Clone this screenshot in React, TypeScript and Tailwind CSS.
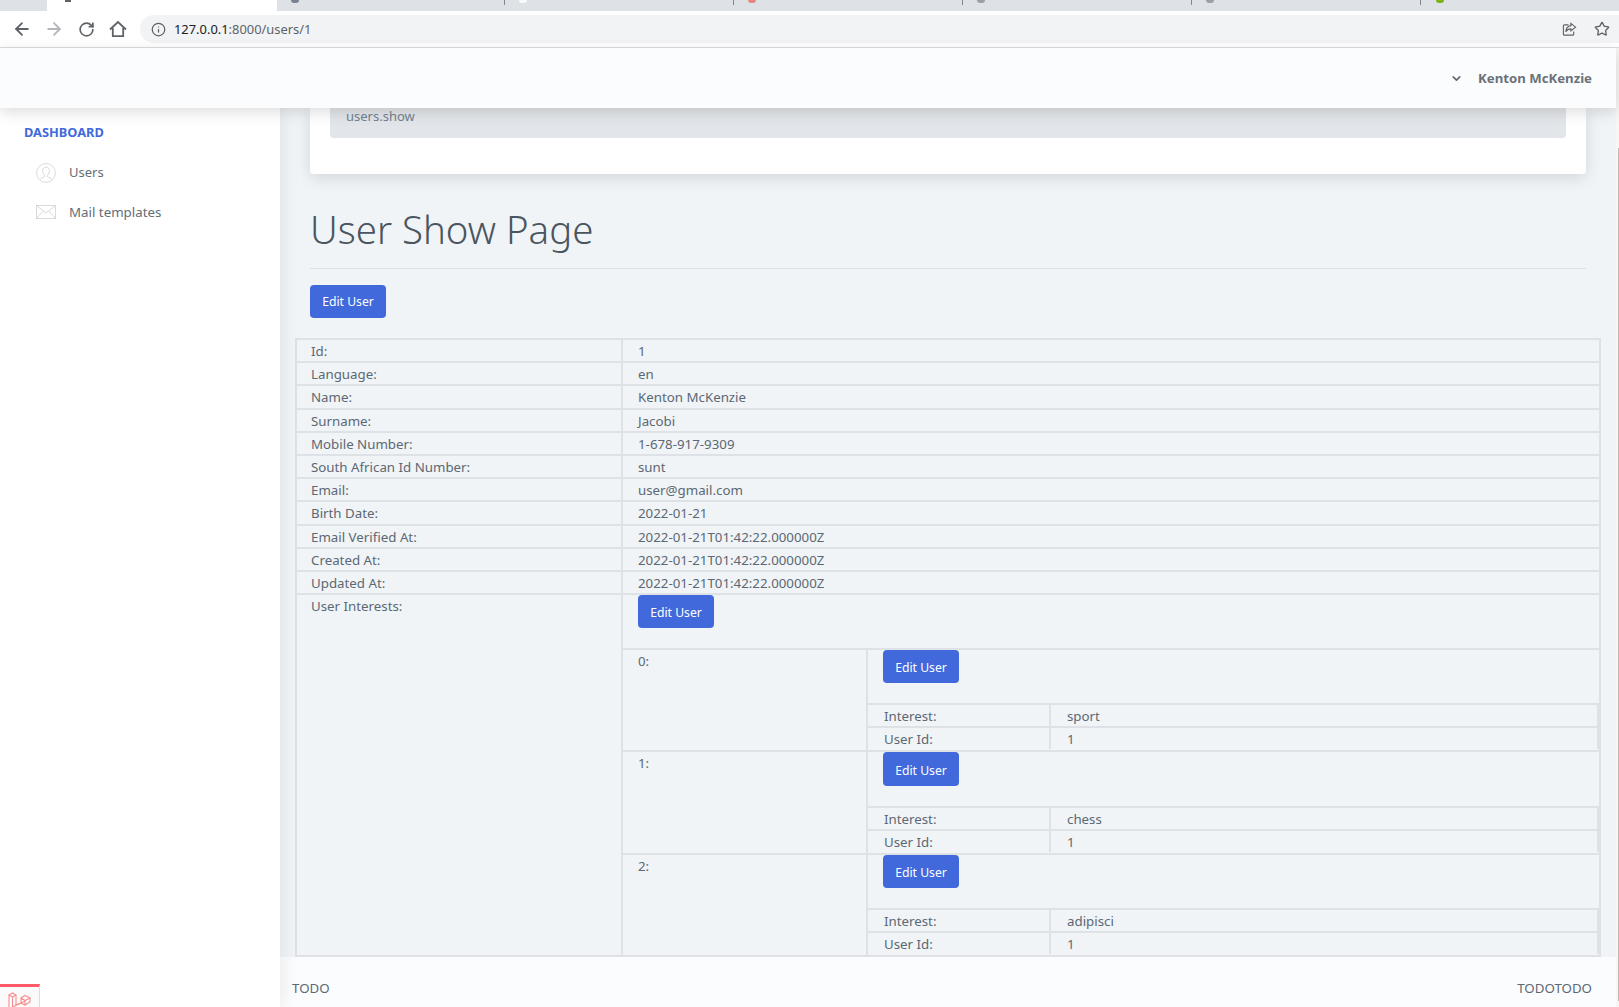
import React from "react";
import { ArrowLeft, ArrowRight, RotateCw, Info, Star, ChevronDown } from "lucide-react";

function Btn({ className = "", tall = false, lead = "leading-[34px]" }: { className?: string; tall?: boolean; lead?: string }) {
  return (
    <div
      className={
        "w-[76px] rounded-[4px] bg-[#4169dc] text-white text-[12.2px] text-center " +
        (tall ? "h-[34px] " : "h-[33px] ") +
        lead +
        " " +
        className
      }
    >
      Edit User
    </div>
  );
}

const rows: [string, string][] = [
  ["Id:", "1"],
  ["Language:", "en"],
  ["Name:", "Kenton McKenzie"],
  ["Surname:", "Jacobi"],
  ["Mobile Number:", "1-678-917-9309"],
  ["South African Id Number:", "sunt"],
  ["Email:", "user@gmail.com"],
  ["Birth Date:", "2022-01-21"],
  ["Email Verified At:", "2022-01-21T01:42:22.000000Z"],
  ["Created At:", "2022-01-21T01:42:22.000000Z"],
  ["Updated At:", "2022-01-21T01:42:22.000000Z"],
];

const tabs: [number, string][] = [
  [228, "bg-[#5f6b7a]"],
  [229, "bg-white"],
  [229, "bg-[#e8716b]"],
  [229, "bg-[#8a9099]"],
  [229, "bg-[#8a9099]"],
];

function Row({ k, v }: { k: string; v: string }) {
  return (
    <div className="flex h-[23.2px] border-t-2 border-[#dee2e6] leading-[22px]">
      <div className="w-[326px] shrink-0 pl-[14px] border-r-2 border-[#dee2e6]">{k}</div>
      <div className="flex-1 pl-[15px]">{v}</div>
    </div>
  );
}

function Interest({ k, v, h, gap, tall }: { k: string; v: string; h: string; gap: string; tall?: boolean }) {
  return (
    <div className={"flex border-t-2 border-[#dee2e6] " + h}>
      <div className="w-[245px] shrink-0 pl-[15px] border-r-2 border-[#dee2e6] leading-[22px]">{k}</div>
      <div className="flex-1 flex flex-col">
        <div className={"pl-[15px] " + gap}>
          <Btn tall={tall} lead={tall ? "leading-[37px]" : "leading-[36px]"} />
        </div>
        <div className="flex h-[23px] border-t-2 border-r-2 border-[#dee2e6] leading-[23px]">
          <div className="w-[183px] shrink-0 pl-[16px] border-r-2 border-[#dee2e6]">Interest:</div>
          <div className="flex-1 pl-[16px]">{v}</div>
        </div>
        <div className="flex h-[23px] border-t-2 border-r-2 border-[#dee2e6] leading-[23px]">
          <div className="w-[183px] shrink-0 pl-[16px] border-r-2 border-[#dee2e6]">User Id:</div>
          <div className="flex-1 pl-[16px]">1</div>
        </div>
      </div>
    </div>
  );
}

export default function App() {
  return (
    <div className="h-[1007px] w-[1619px] overflow-hidden flex flex-col bg-white text-[13.3px] text-[#5c6873] font-['Noto_Sans','Open_Sans',sans-serif]">
      {/* browser tab strip */}
      <div className="h-[11px] shrink-0 bg-[#dee1e6] flex">
        <div className="w-[47px] bg-[#dee1e6]" />
        <div className="w-[230px] bg-white pl-[18px]">
          <div className="w-[6px] h-[2px] bg-[#5f6368]" />
        </div>
        <div className="flex-1 rounded-bl-[8px] bg-[#dee1e6] flex">
          {tabs.map(([w, c], i) => (
            <div key={i} className="h-[5px] border-r border-[#80868b] pl-[14px]" style={{ width: w }}>
              <div className={"w-[8px] h-[3px] rounded-b-full opacity-80 " + c} />
            </div>
          ))}
          <div className="pl-[15px]">
            <div className="w-[8px] h-[3px] rounded-b-full bg-[#7cb518]" />
          </div>
        </div>
      </div>
      {/* browser toolbar */}
      <div className="h-[37px] shrink-0 bg-white border-b border-[#dadce0] flex items-center pl-[12px]">
        <ArrowLeft className="w-[20px] h-[20px] text-[#5f6368]" strokeWidth={2.2} />
        <ArrowRight className="w-[20px] h-[20px] ml-[12px] text-[#b4b6b9]" strokeWidth={2.2} />
        <RotateCw className="w-[17px] h-[17px] ml-[14px] text-[#5f6368]" strokeWidth={2.4} />
        <svg viewBox="0 0 18 18" className="w-[18px] h-[18px] ml-[14px]" fill="none" stroke="#5f6368" strokeWidth="1.8" strokeLinejoin="miter">
          <path d="M1 9.5 9 2l8 7.5M3.8 8v8.2h10.4V8" />
        </svg>
        <div className="ml-[13px] flex-1 h-[28px] rounded-l-full bg-[#f1f3f4] flex items-center pl-[11px] pr-[9px] text-[12.9px] text-[#5f6368]">
          <Info className="w-[15px] h-[15px]" strokeWidth={2} />
          <span className="ml-[8px] mt-[2px] text-[#202124]">127.0.0.1</span>
          <span className="mt-[2px]">:8000/users/1</span>
          <span className="flex-1" />
          <svg viewBox="0 0 16 16" className="w-[15px] h-[15px] mr-[17px]" fill="none" stroke="#5f6368" strokeWidth="1.2">
            <path d="M7 3H2.5a1 1 0 0 0-1 1v9a1 1 0 0 0 1 1h9a1 1 0 0 0 1-1v-3" />
            <path d="M9.5 1.5 14.5 5.5 9.5 9.5V7.3C7 7.3 5.3 8.2 4 10.5 4.3 7 6.3 4.3 9.5 3.9Z" />
          </svg>
          <Star className="w-[16px] h-[16px]" strokeWidth={2} />
        </div>
      </div>
      <div className="flex-1 min-h-0 flex">
        <div className="w-[1616px] shrink-0 flex flex-col">
          {/* app header */}
          <div className="relative z-10 h-[60px] shrink-0 bg-[#fbfcfe] shadow-[0_4px_14px_rgba(0,0,0,0.14)] flex items-center justify-end pr-[24px] pt-[1px]">
            <ChevronDown className="w-[13px] h-[13px] text-[#5c6873] mr-[15px]" strokeWidth={3} />
            <span className="font-bold text-[13.2px] text-[#6b7278]">Kenton McKenzie</span>
          </div>
          {/* body */}
          <div className="flex-1 min-h-0 flex">
            <div className="w-[280px] shrink-0 flex flex-col bg-white relative z-[1] shadow-[0_0_20px_rgba(0,0,0,0.09)]">
              <div className="pl-[24px] pt-[16px] text-[12.8px] leading-[17px] font-bold text-[#4169dc]">DASHBOARD</div>
              <div className="flex items-center pl-[36px] mt-[21px] h-[22px]">
                <svg viewBox="0 0 20 20" className="w-[20px] h-[20px]" fill="none" stroke="#cfd1d3" strokeWidth="0.8">
                  <circle cx="10" cy="10" r="9.4" />
                  <path d="M3.8 16.8c1-2 3.4-2 4.5-2.9.4-.6.3-1.4-.1-1.9-1-1-1.6-2.6-1.6-4.2C6.6 5.5 8 4 10 4s3.4 1.5 3.4 3.8c0 1.6-.6 3.2-1.6 4.2-.4.5-.5 1.3-.1 1.9 1.1.9 3.5.9 4.5 2.9" />
                </svg>
                <span className="ml-[13px] text-[#646d76] text-[13px]">Users</span>
              </div>
              <div className="flex items-center pl-[36px] mt-[18px] h-[22px]">
                <svg viewBox="0 0 20 14" className="w-[20px] h-[14px] mb-[2px]" fill="none" stroke="#cfd1d3" strokeWidth="0.8">
                  <rect x="0.4" y="0.4" width="19.2" height="13.2" />
                  <path d="M0.4 0.4 10 8l9.6-7.6M0.4 13.6 7 6.2M19.6 13.6 13 6.2" />
                </svg>
                <span className="ml-[13px] text-[#646d76]">Mail templates</span>
              </div>
              <div className="flex-1" />
              <div className="w-[40px] h-[23px] border-t-[3px] border-[#ff5a66] border-r border-r-[#dddddd] bg-[#fafafa]">
                <svg viewBox="0 0 39 20" className="w-[39px] h-[20px]" fill="none" stroke="#f58f8f" strokeWidth="1.1">
                  <path d="M9 8 12.5 6 16 8 12.5 10ZM9 8V20M12.5 10V20M16 8V18" />
                  <path d="M21 11 25 8.5 30 11 25 13.5ZM21 11V16M25 13.5V18M30 11V15L25 18 21 16 16 18" />
                  <path d="M12.5 20 25 14" />
                </svg>
              </div>
            </div>
            <div className="flex-1 flex flex-col min-w-0">
              <main className="flex-1 min-h-0 bg-[#f0f4f7] pl-[15px] pr-[15px]">
                <div className="ml-[15px] mr-[15px] h-[66px] bg-white rounded-b-[4px] shadow-[0_4px_16px_rgba(0,0,0,0.12)] px-[20px]">
                  <div className="h-[30px] bg-[#e2e5e9] rounded-b-[4px] pl-[16px] text-[#73818f] text-[13px] leading-[17px]">users.show</div>
                </div>
                <div className="ml-[15px] mr-[15px] mt-[26px] h-[69px] border-b border-[#dcdfe3] pt-[1px]">
                  <h1 className="text-[38.4px] font-light leading-[56px] text-[#4a5560]">User Show Page</h1>
                </div>
                <Btn className="ml-[15px] mt-[16px]" />
                <div className="mt-[20px] border-x-2 border-b-2 border-[#dee2e6] text-[13.3px]">
                  {rows.map(([k, v]) => (
                    <Row key={k} k={k} v={v} />
                  ))}
                  <div className="flex border-t-2 border-[#dee2e6] h-[362px]">
                    <div className="w-[326px] shrink-0 pl-[14px] border-r-2 border-[#dee2e6] leading-[22px]">User Interests:</div>
                    <div className="flex-1 flex flex-col">
                      <div className="h-[53px] pl-[15px]"><Btn lead="leading-[36px]" /></div>
                      <Interest k="0:" v="sport" h="h-[102px]" gap="h-[53px]" />
                      <Interest k="1:" v="chess" h="h-[103px]" gap="h-[54px]" tall />
                      <Interest k="2:" v="adipisci" h="h-[102px]" gap="h-[53px]" />
                    </div>
                  </div>
                </div>
              </main>
              <footer className="h-[50px] shrink-0 bg-[#fbfcfe] flex items-center justify-between pt-[13px] pl-[12px] pr-[24px] text-[#5c6873]">
                <span>TODO</span>
                <span>TODOTODO</span>
              </footer>
            </div>
          </div>
        </div>
        {/* page scrollbar */}
        <div className="flex-1 bg-[#f7f6f5] pt-[100px] flex justify-end">
          <div className="w-[1px] h-[853px] bg-[#bdbab7]" />
        </div>
      </div>
    </div>
  );
}
